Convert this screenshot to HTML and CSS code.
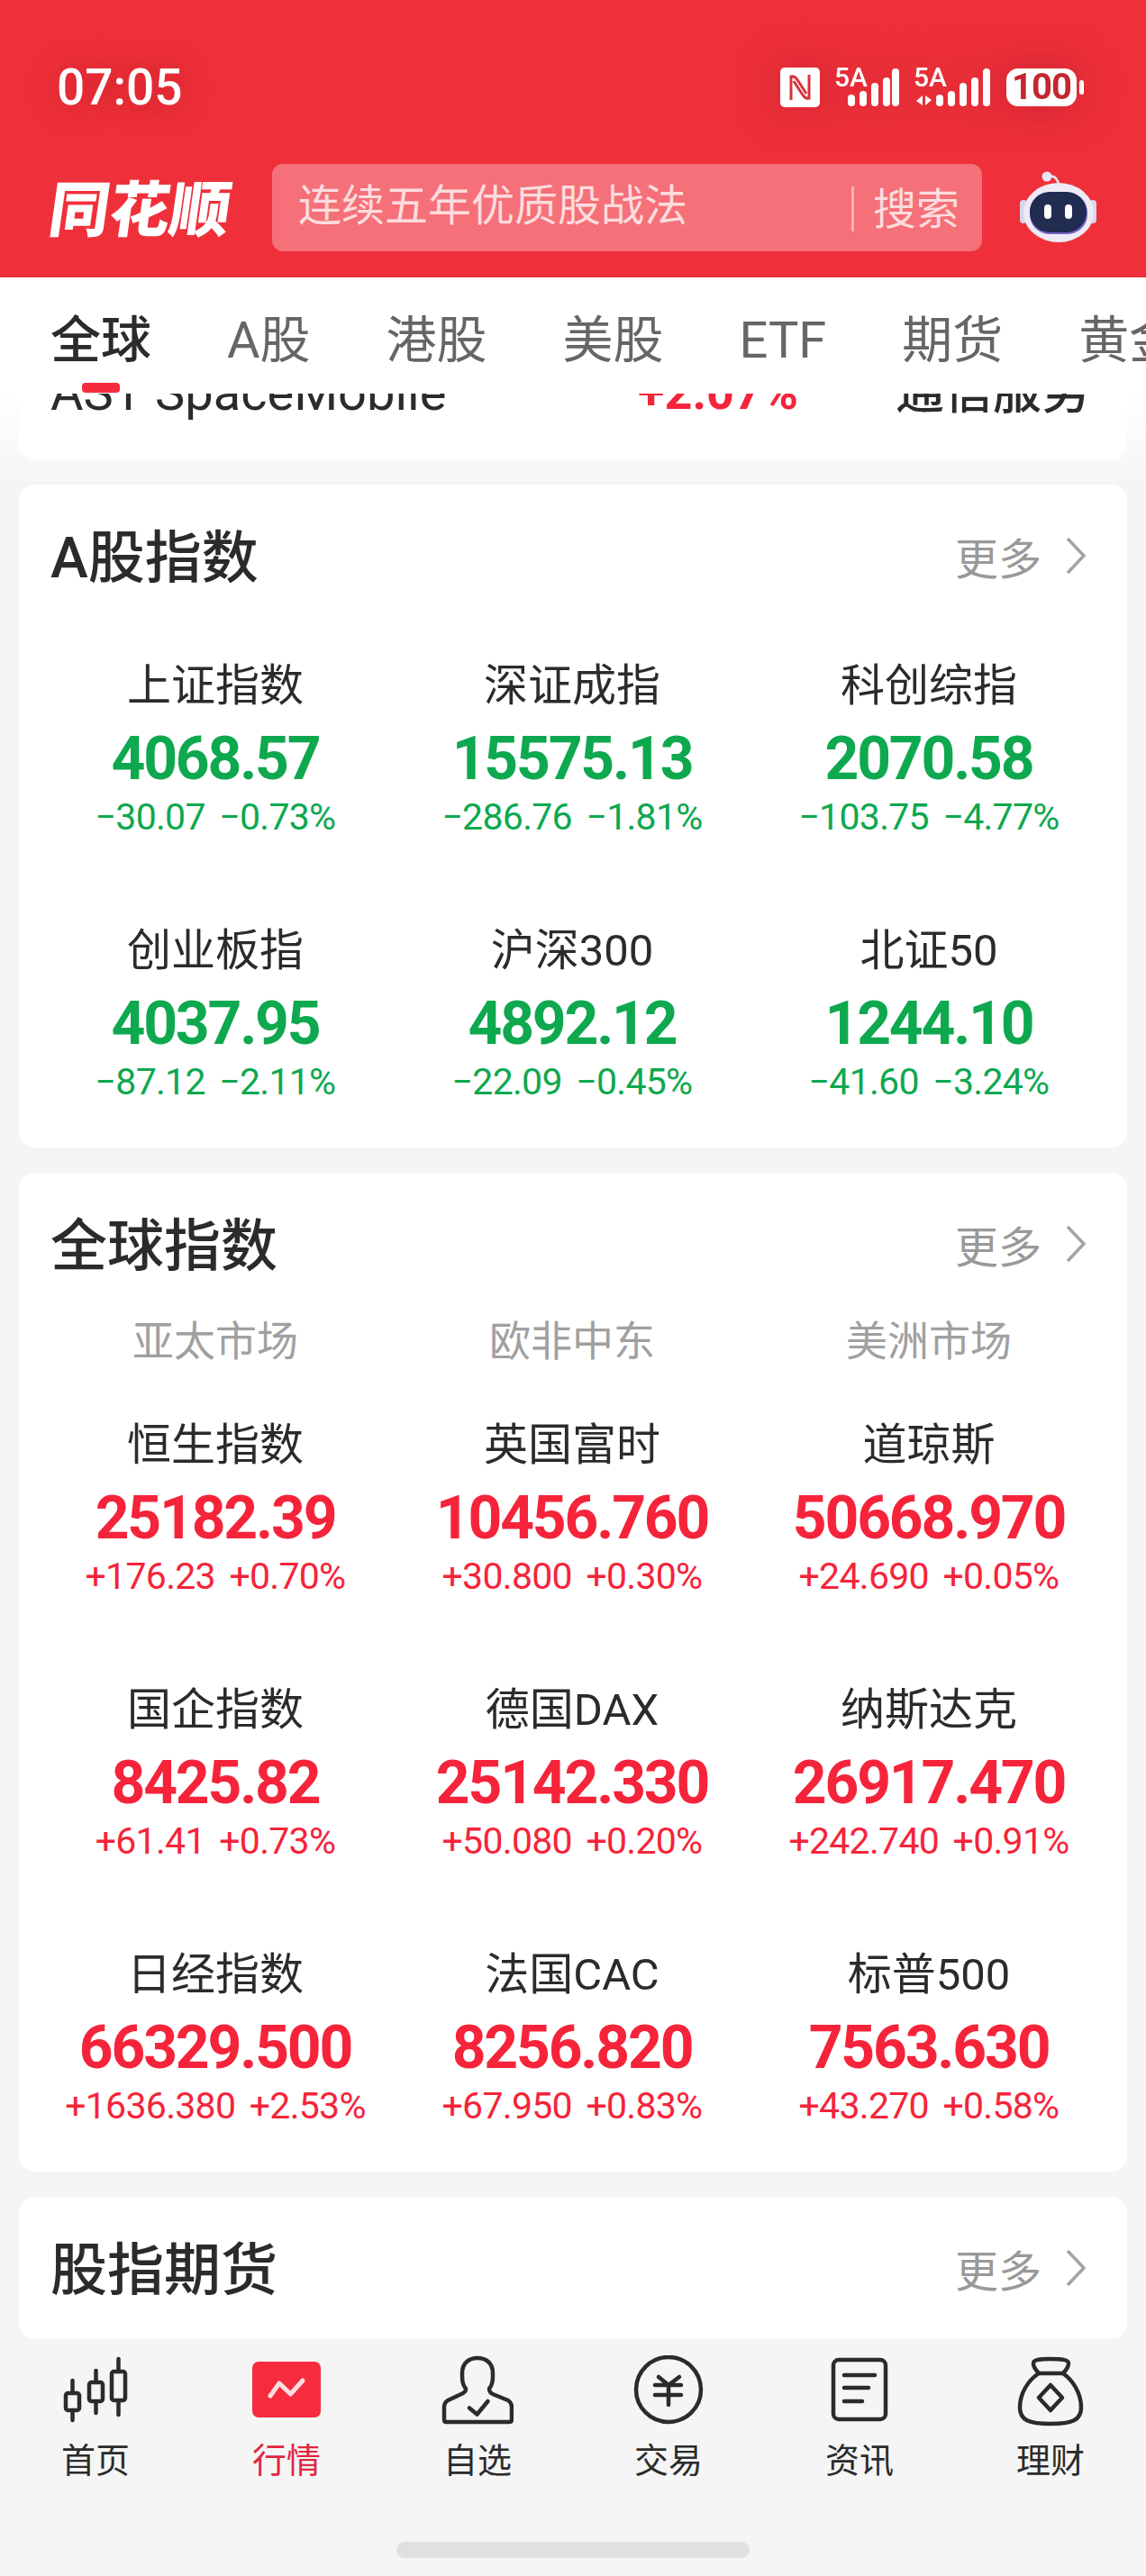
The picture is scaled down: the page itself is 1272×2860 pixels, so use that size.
FILE: index.html
```html
<!DOCTYPE html>
<html lang="zh-CN">
<head>
    <meta charset="UTF-8">
    <title>行情</title>
    <link rel="stylesheet" href="styles.css">
</head>
<body>
<div class="phone">

    <!-- 顶部红色区域 -->
    <header class="header">
        <div class="status-bar">
            <span class="time">07:05</span>
            <div class="status-icons">
                <svg class="nfc" width="44" height="44" viewBox="0 0 44 44">
                    <rect width="44" height="44" rx="5" fill="#fff"/>
                    <path d="M12 36V10C16 9 18 12 20 15L29 29" fill="none" stroke="#d7323b" stroke-width="3"/>
                    <path d="M32 8V34C28 35 26 32 24 29L15 15" fill="none" stroke="#d7323b" stroke-width="3"/>
                </svg>
                <svg class="signal" width="72" height="52" viewBox="0 -8 72 52">
                    <text class="signal-text" x="0" y="21">5A</text>
                    <rect x="15" y="30" width="8" height="13" rx="4"/>
                    <rect x="28" y="26" width="8" height="17" rx="4"/>
                    <rect x="41" y="17" width="8" height="26" rx="4"/>
                    <rect x="54" y="11" width="8" height="32" rx="4"/>
                    <rect x="64" y="1" width="8" height="42" rx="4"/>
                </svg>
                <svg class="signal" width="87" height="52" viewBox="0 -8 87 52">
                    <text class="signal-text" x="0" y="21">5A</text>
                    <path d="M10 31V42L3 37ZM13 42V31L20 36Z"/>
                    <rect x="25" y="30" width="8" height="13" rx="4"/>
                    <rect x="38" y="26" width="8" height="17" rx="4"/>
                    <rect x="51" y="17" width="8" height="26" rx="4"/>
                    <rect x="64" y="11" width="8" height="32" rx="4"/>
                    <rect x="77" y="1" width="8" height="42" rx="4"/>
                </svg>
                <div class="battery">
                    <span class="battery-body">100</span>
                    <span class="battery-tip"></span>
                </div>
            </div>
        </div>
        <div class="search-row">
            <div class="logo">同花顺</div>
            <div class="search">
                <span class="search-hint">连续五年优质股战法</span>
                <span class="search-btn">搜索</span>
            </div>
            <svg class="robot" width="100" height="90" viewBox="0 0 100 90">
                <path d="M37 10C44 8 48 11 50 18" fill="none" stroke="#e6e3f2" stroke-width="2.5"/>
                <circle cx="37" cy="10" r="5.5" fill="#e9e6f3"/>
                <rect x="7" y="36" width="8" height="26" rx="4" fill="#d9d6ec"/>
                <rect x="84" y="36" width="8" height="26" rx="4" fill="#d9d6ec"/>
                <ellipse cx="50" cy="50" rx="39" ry="33" fill="#eeebf6"/>
                <rect x="18" y="28" width="64" height="46" rx="22" fill="#7a63c8"/>
                <rect x="18" y="27" width="63" height="45" rx="22" fill="#202c50"/>
                <rect x="34" y="41" width="8" height="16" rx="4" fill="#fff"/>
                <rect x="57" y="41" width="8" height="16" rx="4" fill="#fff"/>
            </svg>
        </div>
    </header>

    <!-- 分类标签 -->
    <nav class="tabs">
        <span class="tab tab-active">全球</span>
        <span class="tab">A股</span>
        <span class="tab">港股</span>
        <span class="tab">美股</span>
        <span class="tab">ETF</span>
        <span class="tab">期货</span>
        <span class="tab">黄金</span>
    </nav>

    <main class="content">
        <section class="card card-clipped">
            <span class="stock-name">AST SpaceMobile</span>
            <span class="stock-pct">+2.07%</span>
            <span class="stock-sector">通信服务</span>
        </section>

        <section class="card">
            <div class="card-head">
                <h2 class="card-title">A股指数</h2>
                <div class="more">更多
                    <svg width="24" height="44" viewBox="0 0 24 44"><path d="M3 3L21 22L3 41" fill="none" stroke="#a3a3a3" stroke-width="3.5"/></svg>
                </div>
            </div>
            <div class="index-grid index-grid-first">
                <div class="index down">
                    <div class="index-name">上证指数</div>
                    <div class="index-value">4068.57</div>
                    <div class="index-change">−30.07 −0.73%</div>
                </div>
                <div class="index down">
                    <div class="index-name">深证成指</div>
                    <div class="index-value">15575.13</div>
                    <div class="index-change">−286.76 −1.81%</div>
                </div>
                <div class="index down">
                    <div class="index-name">科创综指</div>
                    <div class="index-value">2070.58</div>
                    <div class="index-change">−103.75 −4.77%</div>
                </div>
                <div class="index down">
                    <div class="index-name">创业板指</div>
                    <div class="index-value">4037.95</div>
                    <div class="index-change">−87.12 −2.11%</div>
                </div>
                <div class="index down">
                    <div class="index-name">沪深300</div>
                    <div class="index-value">4892.12</div>
                    <div class="index-change">−22.09 −0.45%</div>
                </div>
                <div class="index down">
                    <div class="index-name">北证50</div>
                    <div class="index-value">1244.10</div>
                    <div class="index-change">−41.60 −3.24%</div>
                </div>
            </div>
        </section>

        <section class="card">
            <div class="card-head">
                <h2 class="card-title">全球指数</h2>
                <div class="more">更多
                    <svg width="24" height="44" viewBox="0 0 24 44"><path d="M3 3L21 22L3 41" fill="none" stroke="#a3a3a3" stroke-width="3.5"/></svg>
                </div>
            </div>
            <div class="region-row">
                <span>亚太市场</span>
                <span>欧非中东</span>
                <span>美洲市场</span>
            </div>
            <div class="index-grid">
                <div class="index up">
                    <div class="index-name">恒生指数</div>
                    <div class="index-value">25182.39</div>
                    <div class="index-change">+176.23 +0.70%</div>
                </div>
                <div class="index up">
                    <div class="index-name">英国富时</div>
                    <div class="index-value">10456.760</div>
                    <div class="index-change">+30.800 +0.30%</div>
                </div>
                <div class="index up">
                    <div class="index-name">道琼斯</div>
                    <div class="index-value">50668.970</div>
                    <div class="index-change">+24.690 +0.05%</div>
                </div>
                <div class="index up">
                    <div class="index-name">国企指数</div>
                    <div class="index-value">8425.82</div>
                    <div class="index-change">+61.41 +0.73%</div>
                </div>
                <div class="index up">
                    <div class="index-name">德国DAX</div>
                    <div class="index-value">25142.330</div>
                    <div class="index-change">+50.080 +0.20%</div>
                </div>
                <div class="index up">
                    <div class="index-name">纳斯达克</div>
                    <div class="index-value">26917.470</div>
                    <div class="index-change">+242.740 +0.91%</div>
                </div>
                <div class="index up">
                    <div class="index-name">日经指数</div>
                    <div class="index-value">66329.500</div>
                    <div class="index-change">+1636.380 +2.53%</div>
                </div>
                <div class="index up">
                    <div class="index-name">法国CAC</div>
                    <div class="index-value">8256.820</div>
                    <div class="index-change">+67.950 +0.83%</div>
                </div>
                <div class="index up">
                    <div class="index-name">标普500</div>
                    <div class="index-value">7563.630</div>
                    <div class="index-change">+43.270 +0.58%</div>
                </div>
            </div>
        </section>

        <section class="card">
            <div class="card-head">
                <h2 class="card-title">股指期货</h2>
                <div class="more">更多
                    <svg width="24" height="44" viewBox="0 0 24 44"><path d="M3 3L21 22L3 41" fill="none" stroke="#a3a3a3" stroke-width="3.5"/></svg>
                </div>
            </div>
        </section>
    </main>

    <!-- 底部导航 -->
    <footer class="bottom-nav">
        <div class="nav-item">
            <svg class="nav-icon" viewBox="0 0 80 80">
                <rect x="7" y="42" width="15" height="19" rx="2.5"/>
                <rect x="33" y="30" width="15" height="21" rx="2.5"/>
                <rect x="58" y="18" width="15" height="32" rx="2.5"/>
                <path d="M14.500 28V42M14.500 61V72M40.500 17V30M40.500 51V64M65.500 4V18M65.500 50V66"/>
            </svg>
            <span class="nav-label">首页</span>
        </div>
        <div class="nav-item nav-item-active">
            <svg class="nav-icon" viewBox="0 0 80 80">
                <rect class="nav-fill" x="2" y="7" width="76" height="62" rx="7"/>
                <path class="nav-zigzag" d="M22 45L32 31L44.500 43L58 28"/>
            </svg>
            <span class="nav-label">行情</span>
        </div>
        <div class="nav-item">
            <svg class="nav-icon" viewBox="0 0 80 80">
                <path d="M27 37C23 32 23 28 23 20C23 8 31 3 40 3C49 3 57 8 57 20C57 28 57 32 53 37C53 41 55 42 58 43.500L74 50C77 52 78 54 78 57L78 71C78 73 77 74 75 74L5 74C3 74 3 73 3 71L3 57C3 54 4 52 7 50L22 43C26 41 27 40 27 37Z"/>
                <path d="M31 58.500L39.500 65.500L51.500 51"/>
            </svg>
            <span class="nav-label">自选</span>
        </div>
        <div class="nav-item">
            <svg class="nav-icon" viewBox="0 0 80 80">
                <circle cx="40" cy="38" r="36"/>
                <path d="M29 24L40 33L52 24M25 33H54M25 44H54M40 33V55"/>
            </svg>
            <span class="nav-label">交易</span>
        </div>
        <div class="nav-item">
            <svg class="nav-icon" viewBox="0 0 80 80">
                <rect x="11" y="5" width="58" height="66" rx="6"/>
                <path d="M23 22H57M23 36H50M23 51H43"/>
            </svg>
            <span class="nav-label">资讯</span>
        </div>
        <div class="nav-item">
            <svg class="nav-icon" viewBox="0 0 80 80">
                <path d="M27 20C24 16 21 14 21 9C21 5 28 4 40 4C52 4 60 5 60 9C60 14 57 16 54 20Z"/>
                <path d="M27 20C15 28 6 42 6 58C6 72 16 76 40 76C64 76 74 72 74 58C74 42 65 28 54 20"/>
                <path d="M40 33L53 47L40 61L27 47Z"/>
            </svg>
            <span class="nav-label">理财</span>
        </div>
        <div class="home-bar"></div>
    </footer>
</div>
</body>
</html>
```

FILE: styles.css
```css
* {
    margin: 0;
    padding: 0;
    box-sizing: border-box;
}

body {
    width: 1272px;
    height: 2860px;
    overflow: hidden;
    font-family: Roboto, "Noto Sans CJK SC", sans-serif;
    color: #2b2b2b;
    background-color: #f5f5f5;
}

.phone {
    width: 1272px;
    height: 2860px;
    display: flex;
    flex-direction: column;
}

/* 顶部 */
.header {
    height: 308px;
    background-color: #ef303a;
    color: #fff;
}

.status-bar {
    height: 90px;
    margin: 52px 0 40px;
    padding: 0 69px 0 63px;
    display: flex;
    justify-content: space-between;
    align-items: center;
}

.time {
    font-size: 55px;
    font-weight: 500;
    line-height: 90px;
    text-shadow: 0 0 36px rgba(130, 10, 20, .45);
}

.status-icons {
    display: flex;
    align-items: center;
    gap: 16px;
    filter: drop-shadow(0 0 26px rgba(130, 10, 20, .4));
}

.signal {
    margin-top: -8px;
    fill: #fff;
}

.signal-text {
    font-family: Roboto, sans-serif;
    font-size: 30px;
    font-weight: 500;
}

.battery {
    display: flex;
    align-items: center;
    gap: 3px;
}

.battery-body {
    width: 78px;
    height: 42px;
    border-radius: 13px;
    background-color: #fff;
    color: #c4262f;
    font-size: 40px;
    font-weight: 700;
    line-height: 42px;
    text-align: center;
    letter-spacing: -1px;
}

.battery-tip {
    width: 5px;
    height: 16px;
    border-radius: 3px;
    background-color: #fff;
}

.search-row {
    height: 97px;
    padding-left: 56px;
    display: flex;
    align-items: center;
}

.logo {
    width: 202px;
    margin: -6px 44px 0 0;
    font-family: "Noto Sans CJK SC", sans-serif;
    font-size: 67px;
    font-weight: 900;
    line-height: 97px;
    white-space: nowrap;
    transform: skewX(-8deg);
}

.search {
    width: 788px;
    height: 97px;
    padding: 0 25px 0 29px;
    border-radius: 12px;
    background-color: #f57078;
    color: #fcdcde;
    display: flex;
    justify-content: space-between;
    align-items: center;
    font-family: "Noto Sans CJK SC", sans-serif;
    font-size: 48px;
}

.search-hint {
    margin-top: -14px;
}

.search-btn {
    margin-top: -6px;
    padding-left: 24px;
    position: relative;
}

/* 搜索前的竖线 */
.search-btn::before {
    content: "";
    position: absolute;
    left: 0;
    top: 14px;
    width: 3px;
    height: 50px;
    background-color: #f9b3b8;
}

.robot {
    margin-left: 35px;
}

/* 标签栏 */
.tabs {
    height: 129px;
    padding: 34px 0 0 56px;
    background-color: #fff;
    display: flex;
    gap: 84px;
    overflow: hidden;
    flex-shrink: 0;
}

.tab {
    font-size: 56px;
    line-height: 72px;
    color: #666;
    white-space: nowrap;
    position: relative;
}

.tab-active {
    color: #2b2b2b;
    font-weight: 500;
}

.tab-active::after {
    content: "";
    position: absolute;
    left: 35px;
    top: 83px;
    width: 42px;
    height: 11px;
    border-radius: 4px;
    background-color: #f62b3e;
}

/* 内容区 */
.content {
    flex: 1;
    padding: 0 21px;
    overflow: hidden;
    background: linear-gradient(#fff, #f5f5f5 100px);
}

.card {
    margin-bottom: 28px;
    border-radius: 18px;
    background-color: #fff;
    overflow: hidden;
}

.card-clipped {
    height: 74px;
    margin-bottom: 27px;
    padding: 0 0 45px 35px;
    border-radius: 0 0 18px 18px;
    display: flex;
    align-items: flex-end;
    font-size: 54px;
    line-height: 60px;
    white-space: nowrap;
}

.stock-name {
    width: 652px;
    flex-shrink: 0;
    font-size: 56px;
}

.stock-pct {
    width: 286px;
    flex-shrink: 0;
    color: #f5243a;
    font-weight: 700;
}

.stock-sector {
    font-weight: 500;
}

.card-head {
    height: 158px;
    padding: 0 45px 0 35px;
    display: flex;
    justify-content: space-between;
    align-items: center;
}

.card-title {
    margin-top: 5px;
    font-size: 63px;
    font-weight: 500;
    line-height: 80px;
}

.more {
    display: flex;
    align-items: center;
    gap: 26px;
    font-size: 48px;
    color: #999;
}

.region-row {
    height: 54px;
    padding: 0 20px;
    display: grid;
    grid-template-columns: repeat(3, 396px);
    font-size: 46px;
    line-height: 58px;
    color: #a0a0a0;
    text-align: center;
}

.index-grid {
    margin-top: 61px;
    padding: 0 20px 51px;
    display: grid;
    grid-template-columns: repeat(3, 396px);
    row-gap: 97px;
    text-align: center;
}

.index-grid-first {
    margin-top: 36px;
}

.index {
    height: 197px;
    white-space: nowrap;
}

.index-name {
    font-size: 49px;
    line-height: 60px;
}

.index-value {
    margin-top: 11px;
    font-size: 66px;
    font-weight: 700;
    line-height: 80px;
    letter-spacing: -2.2px;
}

.index-change {
    margin-top: 2px;
    font-size: 41px;
    line-height: 44px;
    letter-spacing: -.7px;
    word-spacing: 6px;
}

/* 涨跌颜色 */
.up {
    --trend: #f5243a;
}

.down {
    --trend: #0ea84f;
}

.index-value,
.index-change {
    color: var(--trend);
}

/* 底部导航 */
.bottom-nav {
    height: 264px;
    flex-shrink: 0;
    padding-top: 19px;
    display: grid;
    grid-template-columns: repeat(6, 212px);
    background-color: #f5f5f5;
    position: relative;
    align-content: start;
    text-align: center;
}

.nav-item {
    display: flex;
    flex-direction: column;
    align-items: center;
}

.nav-icon {
    width: 80px;
    height: 80px;
    fill: none;
    stroke: #2b2b2b;
    stroke-width: 4.5;
    stroke-linecap: round;
    stroke-linejoin: round;
}

.nav-fill {
    fill: #f62b3e;
    stroke: none;
}

.nav-zigzag {
    stroke: #fbdde0;
    stroke-width: 5;
}

.nav-label {
    margin-top: 15px;
    font-size: 38px;
    line-height: 44px;
}

.nav-item-active .nav-label {
    color: #e0263f;
}

.home-bar {
    position: absolute;
    left: 440px;
    top: 226px;
    width: 392px;
    height: 18px;
    border-radius: 9px;
    background-color: #e0e0e0;
}
```
